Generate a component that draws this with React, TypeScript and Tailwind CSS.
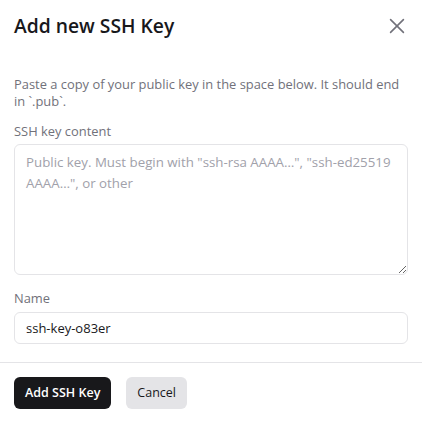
const App = () => {
  return (
    <div className="w-[422px] h-[421px] bg-white font-['Open_Sans',sans-serif] text-[#18181b]">
      <div className="flex items-center justify-between px-[14px] h-[52px]">
        <h2 className="text-[19.3px] font-semibold leading-none">Add new SSH Key</h2>
        <button className="text-[#71717a]">
          <svg width="22" height="22" viewBox="0 0 24 24" fill="none" stroke="currentColor" strokeWidth="1.75" strokeLinecap="round">
            <path d="M5 5l14 14M19 5L5 19" />
          </svg>
        </button>
      </div>
      <div className="px-[14px] pt-[24px]">
        <p className="text-[12.9px] leading-[17px] text-[#71717a]">
          Paste a copy of your public key in the space below. It should end in `.pub`.
        </p>
        <label className="block mt-[13px] text-[12.9px] leading-[17px] text-[#71717a]">SSH key content</label>
        <textarea
          className="mt-[4px] w-full h-[131px] block border border-[#e4e4e7] rounded-[6px] px-[11px] py-[7px] text-[13.3px] leading-[21px] placeholder:text-[#a1a1aa] outline-none"
          placeholder={'Public key. Must begin with "ssh-rsa AAAA…", "ssh-ed25519 AAAA…", or other'}
        />
        <label className="block mt-[15px] text-[12.9px] leading-[17px] text-[#71717a]">Name</label>
        <input
          className="mt-[5px] w-full h-[32px] block border border-[#e4e4e7] rounded-[6px] px-[11px] text-[13px] text-[#18181b] outline-none"
          defaultValue="ssh-key-o83er"
        />
      </div>
      <div className="mt-[18px] border-t border-[#e4e4e7]" />
      <div className="flex gap-[15px] px-[14px] pt-[14px]">
        <button className="h-[32px] px-[11px] rounded-[6px] bg-[#18181b] text-white text-[12.5px] font-semibold">Add SSH Key</button>
        <button className="h-[32px] px-[11px] rounded-[6px] bg-[#e4e4e7] text-[#18181b] text-[12.5px] font-medium">Cancel</button>
      </div>
    </div>
  );
};
export default App;
